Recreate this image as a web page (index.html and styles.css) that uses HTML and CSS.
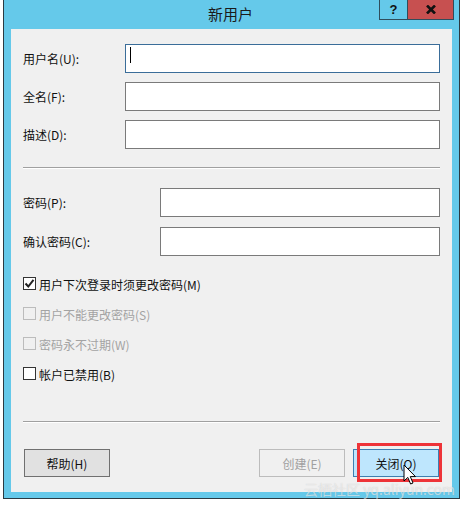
FILE: index.html
```html
<!DOCTYPE html>
<html lang="zh-CN">
<head>
<meta charset="utf-8">
<title>新用户</title>
<link rel="stylesheet" href="styles.css">
</head>
<body>
<div class="window">
  <div class="titlebar">
    <span class="title">新用户</span>
    <div class="controls">
      <span class="ctl ctl-help">?</span>
      <span class="ctl ctl-close">
        <svg width="10" height="9" viewBox="0 0 10 9"><path d="M1 0.5 L9 8.5 M9 0.5 L1 8.5" stroke="#111" stroke-width="2.6" fill="none"/></svg>
      </span>
    </div>
  </div>
  <div class="client">
    <div class="fields fields-a">
      <label class="lbl">用户名(U):</label>
      <div class="input focus"><span class="caret"></span></div>
      <label class="lbl">全名(F):</label>
      <div class="input"></div>
      <label class="lbl">描述(D):</label>
      <div class="input"></div>
    </div>
    <div class="sep sep-top"></div>
    <div class="fields fields-b">
      <label class="lbl">密码(P):</label>
      <div class="input"></div>
      <label class="lbl">确认密码(C):</label>
      <div class="input"></div>
    </div>
    <div class="checks">
      <div class="check">
        <span class="box">
          <svg width="11" height="11" viewBox="0 0 11 11"><path d="M1.5 5.5 L4.3 8.5 L9.5 1.8" stroke="#222" stroke-width="2" fill="none"/></svg>
        </span>
        <span class="ctext">用户下次登录时须更改密码(M)</span>
      </div>
      <div class="check disabled"><span class="box"></span><span class="ctext">用户不能更改密码(S)</span></div>
      <div class="check disabled"><span class="box"></span><span class="ctext">密码永不过期(W)</span></div>
      <div class="check"><span class="box"></span><span class="ctext">帐户已禁用(B)</span></div>
    </div>
    <div class="sep sep-bottom"></div>
    <div class="buttons">
      <button class="btn">帮助(H)</button>
      <div class="right-btns">
        <button class="btn disabled">创建(E)</button>
        <div class="close-wrap">
          <button class="btn primary">关闭(O)</button>
          <span class="highlight"></span>
          <svg class="cursor" width="14" height="22" viewBox="0 0 14 22"><path d="M1 1 L1 17 L4.8 13.4 L7.6 20 L10 19 L7.3 12.6 L12.5 12.6 Z" fill="#fff" stroke="#000" stroke-width="1" stroke-linejoin="round"/></svg>
        </div>
      </div>
    </div>
  </div>
  <span class="watermark">云栖社区 yq.aliyun.com</span>
</div>
</body>
</html>
```
FILE: styles.css
```css
html, body {
  margin: 0;
  padding: 0;
  background: #ffffff;
}
body {
  font-family: "Noto Sans CJK SC", "Liberation Sans", sans-serif;
  font-size: 12px;
  color: #000;
}
.window {
  position: relative;
  margin-left: 3px;
  width: 457px;
  box-sizing: border-box;
  background: #65c9ea;
  border: 1px solid #2b3a42;
  border-top: none;
  padding: 0 7px 6px 7px;
}
.titlebar {
  height: 29px;
  text-align: center;
  line-height: 27px;
}
.title {
  font-size: 15px;
  color: #1a1a1a;
  margin-left: -2px;
}
.controls {
  position: absolute;
  top: 0;
  right: 5px;
  display: flex;
  border: 1px solid #2f4d5c;
  border-top: none;
  height: 19px;
}
.ctl {
  display: flex;
  align-items: center;
  justify-content: center;
  height: 19px;
}
.ctl-help {
  width: 27px;
  border-right: 1px solid #2f4d5c;
  font-family: "Liberation Sans", sans-serif;
  font-weight: bold;
  font-size: 13px;
  color: #111;
  line-height: 19px;
}
.ctl-close {
  width: 45px;
  background: #c75050;
}
.client {
  background: #f0f0f0;
  height: 463px;
  box-sizing: border-box;
  padding: 15px 12px 15px 12px;
  display: flex;
  flex-direction: column;
}
.fields {
  display: grid;
  align-items: center;
}
.fields-a {
  grid-template-columns: 102px 1fr;
  row-gap: 9px;
}
.fields-b {
  grid-template-columns: 137px 1fr;
  row-gap: 10px;
  margin-top: 19px;
}
.lbl {
  color: #111;
  padding-bottom: 1px;
}
.input {
  height: 29px;
  box-sizing: border-box;
  background: #fff;
  border: 1px solid #7a7a7a;
  position: relative;
}
.input.focus {
  border-color: #3a6d99;
}
.caret {
  position: absolute;
  left: 4px;
  top: 2px;
  width: 1px;
  height: 16px;
  background: #000;
}
.sep {
  height: 1px;
  background: #a0a0a0;
  border-bottom: 1px solid #ffffff;
}
.sep-top {
  margin-top: 18px;
}
.sep-bottom {
  margin-top: 32px;
}
.checks {
  margin-top: 13px;
  display: flex;
  flex-direction: column;
}
.check {
  height: 30px;
  display: flex;
  align-items: center;
  gap: 3px;
}
.box {
  width: 13px;
  height: 13px;
  box-sizing: border-box;
  border: 1px solid #333;
  background: #fff;
  display: flex;
  align-items: center;
  justify-content: center;
  margin-top: -1px;
}
.ctext {
  color: #111;
}
.check.disabled .box {
  border-color: #bcbcbc;
  background: #f0f0f0;
}
.check.disabled .ctext {
  color: #a3a3a3;
}
.buttons {
  margin-top: 26px;
  display: flex;
  justify-content: space-between;
  padding-left: 1px;
}
.right-btns {
  display: flex;
  gap: 8px;
  padding-right: 1px;
}
.btn {
  width: 86px;
  height: 28px;
  box-sizing: border-box;
  background: #e1e1e1;
  border: 1px solid #707070;
  font-family: "Noto Sans CJK SC", "Liberation Sans", sans-serif;
  font-size: 12px;
  color: #111;
  padding: 0;
  margin: 0;
}
.btn.disabled {
  background: #f0f0f0;
  border-color: #bcbcbc;
  color: #a0a0a0;
}
.btn.primary {
  background: #bee6fd;
  border-color: #3c7fb1;
}
.close-wrap {
  position: relative;
}
.highlight {
  position: absolute;
  left: 4px;
  top: -6px;
  width: 85px;
  height: 39px;
  box-sizing: border-box;
  border: 3px solid #ee3338;
}
.cursor {
  position: absolute;
  left: 50px;
  top: 15px;
}
.watermark {
  position: absolute;
  left: 300px;
  bottom: 1px;
  font-size: 14px;
  line-height: 16px;
  color: rgba(255, 255, 255, 0.55);
  text-shadow: 0 0 1px rgba(120, 120, 120, 0.35);
  white-space: nowrap;
}
```
